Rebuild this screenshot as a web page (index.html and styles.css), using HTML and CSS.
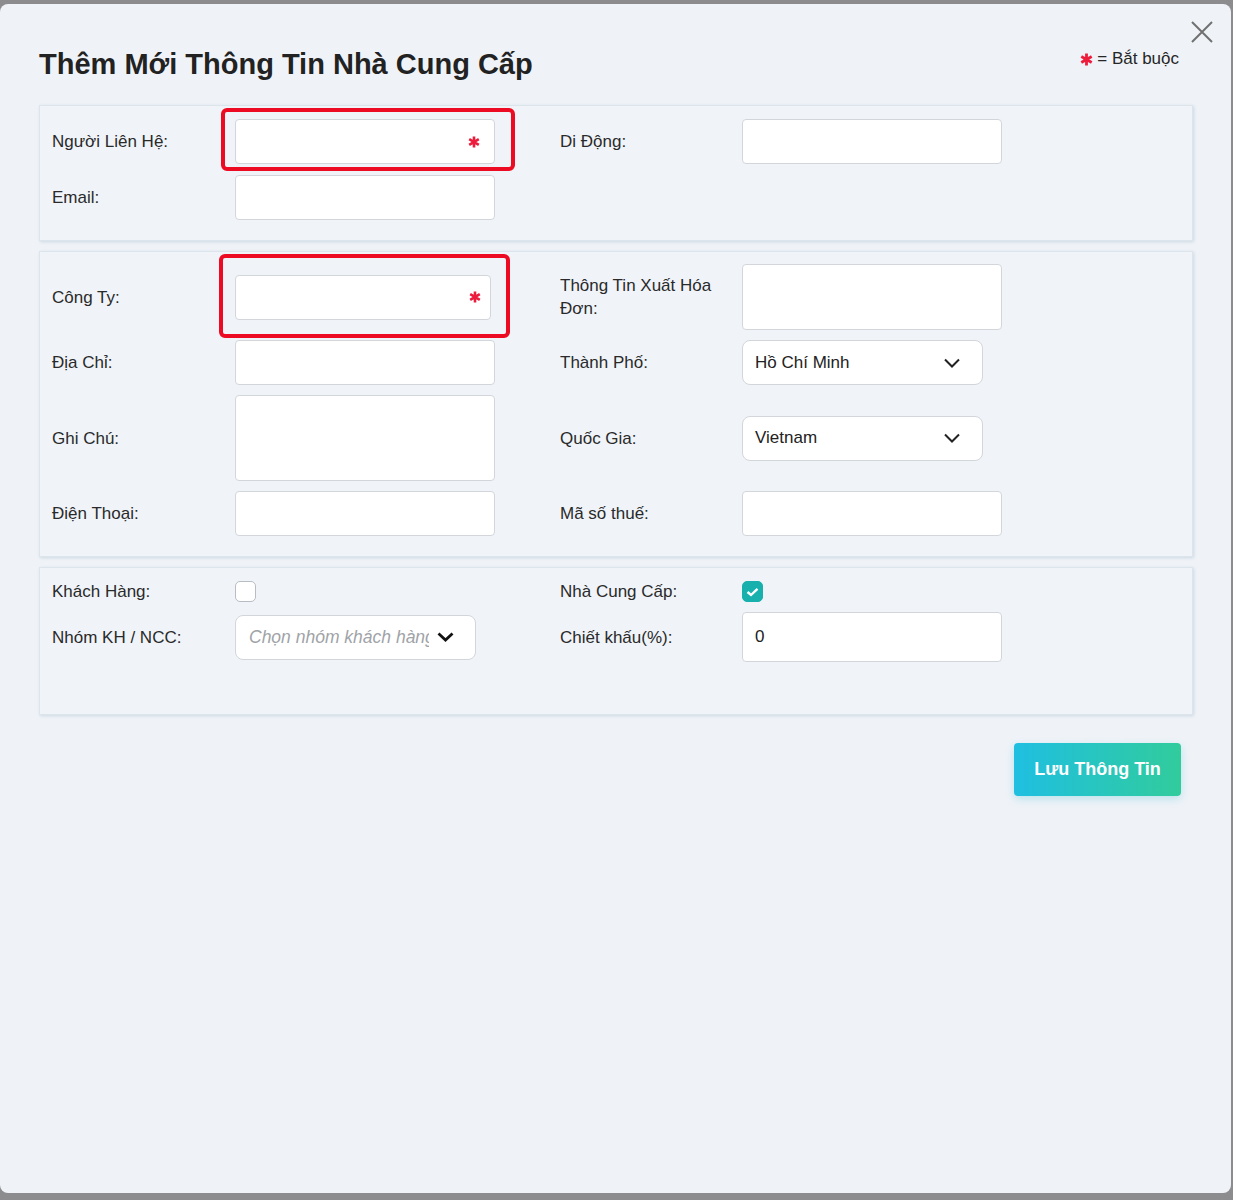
FILE: index.html
```html
<!DOCTYPE html>
<html lang="vi">
<head>
  <meta charset="UTF-8">
  <title>Thêm Mới Thông Tin Nhà Cung Cấp</title>
  <link rel="stylesheet" href="styles.css">
</head>
<body>

  <div class="modal">
    <button class="close-btn" type="button" aria-label="Đóng">
      <svg width="22" height="22" viewBox="0 0 22 22"><path d="M1 1 L21 21 M21 1 L1 21" stroke="#707070" stroke-width="2" fill="none"/></svg>
    </button>

    <div class="modal-head">
      <h1>Thêm Mới Thông Tin Nhà Cung Cấp</h1>
      <span class="legend">
        <svg class="req big" viewBox="0 0 12 12"><path d="M6 0.5 V11.5 M1.2 3.2 L10.8 8.8 M10.8 3.2 L1.2 8.8" stroke="#ee1c3c" stroke-width="2.6" fill="none"/></svg>
        = Bắt buộc
      </span>
    </div>

    <form onsubmit="event.preventDefault()">
      <!-- Liên hệ -->
      <div class="panel panel-contact">
        <label>Người Liên Hệ:</label>
        <div class="field mark mark-contact">
          <input type="text" class="text-input">
          <svg class="req" viewBox="0 0 12 12"><path d="M6 0.5 V11.5 M1.2 3.2 L10.8 8.8 M10.8 3.2 L1.2 8.8" stroke="#ee1c3c" stroke-width="2.6" fill="none"/></svg>
        </div>
        <label>Di Động:</label>
        <input type="text" class="text-input">

        <label>Email:</label>
        <input type="text" class="text-input">
      </div>

      <!-- Công ty -->
      <div class="panel panel-company">
        <label>Công Ty:</label>
        <div class="field mark mark-company">
          <input type="text" class="text-input narrow">
          <svg class="req" viewBox="0 0 12 12"><path d="M6 0.5 V11.5 M1.2 3.2 L10.8 8.8 M10.8 3.2 L1.2 8.8" stroke="#ee1c3c" stroke-width="2.6" fill="none"/></svg>
        </div>
        <label>Thông Tin Xuất Hóa Đơn:</label>
        <textarea class="text-input invoice"></textarea>

        <label>Địa Chỉ:</label>
        <input type="text" class="text-input">
        <label>Thành Phố:</label>
        <div class="select">
          <span>Hồ Chí Minh</span>
          <svg width="16" height="10" viewBox="0 0 16 10"><path d="M1 1.5 L8 8.5 L15 1.5" stroke="#222" stroke-width="2" fill="none"/></svg>
        </div>

        <label>Ghi Chú:</label>
        <textarea class="text-input note"></textarea>
        <label>Quốc Gia:</label>
        <div class="select">
          <span>Vietnam</span>
          <svg width="16" height="10" viewBox="0 0 16 10"><path d="M1 1.5 L8 8.5 L15 1.5" stroke="#222" stroke-width="2" fill="none"/></svg>
        </div>

        <label>Điện Thoại:</label>
        <input type="text" class="text-input">
        <label>Mã số thuế:</label>
        <input type="text" class="text-input">
      </div>

      <!-- Phân loại -->
      <div class="panel panel-type">
        <label>Khách Hàng:</label>
        <span class="check"></span>
        <label>Nhà Cung Cấp:</label>
        <span class="check checked">
          <svg width="13" height="10" viewBox="0 0 13 10"><path d="M1.5 5 L5 8 L11.5 1.8" stroke="#fff" stroke-width="2.4" fill="none"/></svg>
        </span>

        <label>Nhóm KH / NCC:</label>
        <div class="select group-select">
          <span class="placeholder">Chọn nhóm khách hàng</span>
          <svg width="17" height="10" viewBox="0 0 17 10"><path d="M1.5 1.5 L8.5 8 L15.5 1.5" stroke="#111" stroke-width="2.8" fill="none"/></svg>
        </div>
        <label>Chiết khấu(%):</label>
        <input type="text" class="text-input discount" value="0">
      </div>

      <div class="actions">
        <button type="submit" class="save-btn">Lưu Thông Tin</button>
      </div>
    </form>
  </div>

</body>
</html>
```

FILE: styles.css
```css
body {
  margin: 0;
  background: #8c8c8e;
  font-family: "Liberation Sans", Arial, sans-serif;
  color: #262626;
}

.modal {
  position: relative;
  width: 1231px;
  height: 1189px;
  margin-top: 4px;
  box-sizing: border-box;
  padding: 0 38px 0 39px;
  background: #eff3f8;
  border-radius: 8px;
}

.close-btn {
  position: absolute;
  top: 17px;
  right: 18px;
  padding: 0;
  border: none;
  background: none;
  line-height: 0;
  cursor: pointer;
}

.close-btn svg {
  display: block;
}

.modal-head {
  display: flex;
  justify-content: space-between;
  align-items: flex-start;
  height: 101px;
}

.modal-head h1 {
  margin: 44px 0 0;
  font-size: 29px;
  font-weight: bold;
  color: #222;
}

.legend {
  display: flex;
  align-items: center;
  gap: 4px;
  margin: 45px 14px 0 0;
  font-size: 17px;
  color: #262626;
}

.req {
  width: 12px;
  height: 12px;
}

.req.big {
  width: 13px;
  height: 13px;
}

.panel {
  display: grid;
  grid-template-columns: 183px 325px 182px 1fr;
  align-items: center;
  row-gap: 11px;
  margin-bottom: 10px;
  padding: 13px 12px 20px;
  background: #f0f4f9;
  border: 1px solid #dde5ec;
  box-shadow: 1px 1px 3px rgba(40, 80, 110, 0.16);
}

.panel-company {
  padding-top: 12px;
  row-gap: 10px;
}

.panel-type {
  padding: 12px 12px 52px;
  row-gap: 9px;
}

.panel label {
  font-size: 17px;
  line-height: 23px;
  color: #2a2a2a;
  padding-right: 20px;
}

.text-input {
  display: block;
  width: 260px;
  height: 45px;
  box-sizing: border-box;
  padding: 0 12px;
  background: #fff;
  border: 1px solid #d2d6db;
  border-radius: 4px;
  font-family: inherit;
  font-size: 17px;
  color: #222;
  outline: none;
}

.text-input.narrow {
  width: 256px;
}

textarea.text-input {
  resize: none;
}

.invoice {
  height: 66px;
}

.note {
  height: 86px;
}

.discount {
  height: 50px;
}

.field {
  position: relative;
  width: 260px;
}

.field .req {
  position: absolute;
  top: 50%;
  right: 15px;
  margin-top: -6px;
}

.mark-company .req {
  right: 14px;
}

/* red highlight frames around required fields */
.mark::after {
  content: "";
  position: absolute;
  border: 4px solid #ec0b22;
  border-radius: 6px;
  pointer-events: none;
}

.mark-contact::after {
  top: -11px;
  bottom: -7px;
  left: -14px;
  right: -20px;
}

.mark-company::after {
  top: -21px;
  bottom: -18px;
  left: -16px;
  right: -15px;
}

.select {
  display: flex;
  justify-content: space-between;
  align-items: center;
  width: 241px;
  height: 45px;
  box-sizing: border-box;
  padding: 0 22px 0 12px;
  background: #fff;
  border: 1px solid #d2d6db;
  border-radius: 8px;
  font-size: 17px;
  color: #222;
}

.group-select {
  padding: 0 21px 0 13px;
}

.placeholder {
  width: 180px;
  overflow: hidden;
  white-space: nowrap;
  font-size: 17.5px;
  font-style: italic;
  color: #a0a3a7;
}

.check {
  display: flex;
  align-items: center;
  justify-content: center;
  width: 21px;
  height: 21px;
  box-sizing: border-box;
  background: #fff;
  border: 1px solid #b8bdc3;
  border-radius: 5px;
}

.check.checked {
  background: #17b0ad;
  border-color: #17b0ad;
}

.actions {
  display: flex;
  justify-content: flex-end;
  padding: 18px 12px 0 0;
}

.save-btn {
  width: 167px;
  height: 53px;
  border: none;
  border-radius: 4px;
  background: linear-gradient(90deg, #1fbfe2, #31cc9c);
  box-shadow: 0 3px 8px rgba(30, 180, 200, 0.25);
  color: #fff;
  font-family: inherit;
  font-size: 18px;
  font-weight: bold;
  cursor: pointer;
}
```
